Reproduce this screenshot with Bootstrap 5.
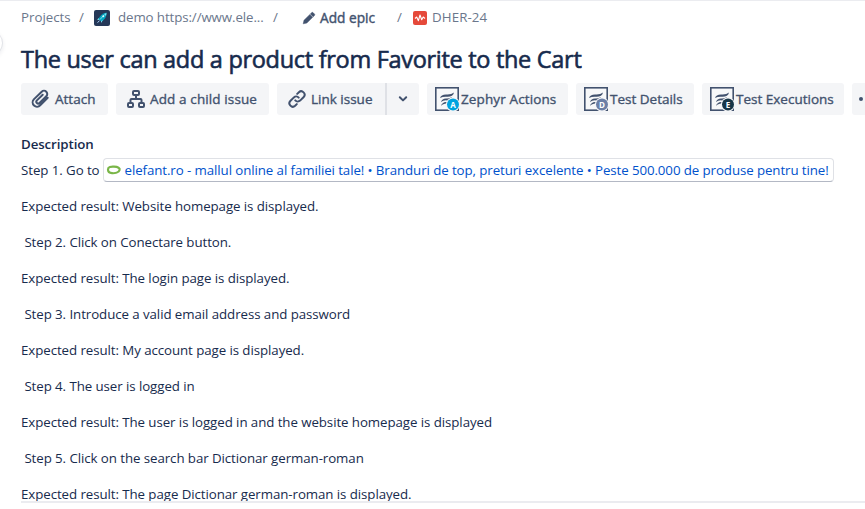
<!DOCTYPE html>
<html lang="en">
<head>
<meta charset="utf-8">
<meta name="viewport" content="width=device-width, initial-scale=1">
<title>DHER-24</title>
<link href="https://cdn.jsdelivr.net/npm/bootstrap@5.3.0/dist/css/bootstrap.min.css" rel="stylesheet">
<style>
body{font-family:"Segoe UI","Open Sans","Noto Sans",sans-serif;font-size:13.3px;color:#172b4d;height:509px;overflow:hidden;background:#fff}
.topline{height:1px;background:#ebecf0}
.side-handle{position:absolute;left:-22px;top:31px;width:24px;height:24px;border-radius:50%;box-shadow:0 0 0 1px rgba(9,30,66,.08),0 2px 4px 1px rgba(9,30,66,.08)}
.page{margin-left:21px}
.crumbs{height:33px;padding-top:1px;color:#6b778c;white-space:nowrap}
.crumbs .epic{color:#42526e;font-size:13.7px;-webkit-text-stroke:.4px #42526e}
.issue-title{font-size:23.5px;font-weight:400;line-height:28px;margin:11px 0 10px;color:#172b4d;white-space:nowrap;letter-spacing:-.3px;-webkit-text-stroke:.6px #172b4d}
.actions{gap:8px;width:844px;overflow:hidden}
.act{height:32px;flex:none;background:#f4f5f7;border-radius:3px;color:#42526e;font-size:13.5px;white-space:nowrap;line-height:32px}
.act span{-webkit-text-stroke:.35px #42526e}
.act svg,.crumbs svg,.smart svg{flex:none;display:block}
.desc-title{font-size:13.3px;font-weight:600;line-height:20px;margin:19px 0 4px;letter-spacing:-.1px}
.desc{height:345px;overflow:hidden;width:844px;border-bottom:2px solid #ebecf0;white-space:pre;letter-spacing:-.075px}
.desc p{line-height:24px;margin:0 0 12px}
.smart{height:24px;border:1px solid #dfe1e6;border-bottom-color:#b3b8c4;border-radius:4px;color:#0052cc;text-decoration:none;margin-left:3px;width:731px;padding-left:2px;letter-spacing:-.09px}
</style>
</head>
<body>
<div class="topline"></div>
<div class="side-handle"></div>
<main class="page">
<nav class="crumbs d-flex align-items-center">
  <span style="width:58px">Projects</span><span style="width:15px">/</span>
  <svg width="16" height="16" viewBox="0 0 16 16"><rect width="16" height="16" rx="2" fill="#253858"/><path d="M4.5 9.5Q6 4 12.5 2.5Q13 8 7.5 11.5Z" fill="#00a3bf"/><path d="M5 8L3 9.5L5 10ZM7 11L7 13L9 10ZM10 4L12.5 3L12 6Z" fill="#79e2f2"/><path d="M6 9.5L10 5.2" stroke="#79e2f2"/><circle cx="9.3" cy="6.3" r="1" fill="#dffbff"/><path d="M3.5 12.5L5.5 10.8" stroke="#b3d4ff"/></svg>
  <span style="width:155px;margin-left:8px;letter-spacing:-.1px">demo https://www.ele...</span><span style="width:29px">/</span>
  <svg width="14" height="14" viewBox="0 0 14 14"><path d="M1.2 12.8L2 9.3L7.9 3.4L10.7 6.2L4.8 12.1ZM8.4 2.9L9.7 1.6Q10.3 1 11 1.6L12.5 3.1Q13.1 3.8 12.5 4.4L11.2 5.7Z" fill="#42526e" stroke="#42526e" stroke-width=".5"/></svg>
  <span class="epic" style="width:77px;margin-left:4px">Add epic</span><span style="width:16px">/</span>
  <svg width="14" height="14" viewBox="0 0 14 14"><rect width="14" height="14" rx="2" fill="#e5493a"/><path d="M2 7.5L3.7 6L5.4 9.7L7 4L8.7 8.7L10.2 6L12 7.5" fill="none" stroke="#fff" stroke-width="1.1" stroke-linejoin="round"/></svg>
  <span style="margin-left:5px;letter-spacing:.1px">DHER-24</span>
</nav>
<h1 class="issue-title">The user can add a product from Favorite to the Cart</h1>
<div class="actions d-flex">
  <div class="act d-flex align-items-center" style="width:87px;padding-left:10px"><svg width="19" height="20" viewBox="0 0 19 20" fill="none" stroke="#42526e" stroke-width="2" stroke-linecap="round"><path d="M16.7 8.8L9.2 16.3A4.2 4.2 0 0 1 2.8 10.4L10.7 2.7A3.2 3.2 0 0 1 15.3 7.3L8.5 14A1.8 1.8 0 0 1 5.9 11.4L11.7 5.7"/></svg><span style="margin-left:5px">Attach</span></div>
  <div class="act d-flex align-items-center" style="width:153px;padding-left:11px"><svg width="18" height="18" viewBox="0 0 18 18" fill="none" stroke="#42526e" stroke-width="2"><rect x="6" y="1" width="6" height="4" rx="1"/><rect x="1" y="13" width="5" height="4" rx="1"/><rect x="12" y="13" width="5" height="4" rx="1"/><path d="M9 5V9M3.5 13V10Q3.5 9 4.5 9H13.5Q14.5 9 14.5 10V13"/></svg><span style="margin-left:5px;letter-spacing:.12px">Add a child issue</span></div>
  <div class="act d-flex align-items-center" style="width:142px;padding-left:11px"><svg width="18" height="18" viewBox="0 0 18 18" fill="none" stroke="#42526e" stroke-width="2" stroke-linecap="round"><path d="M7.3 10.4A3.4 3.4 0 0 0 12.1 10.6L15.7 7A3.4 3.4 0 0 0 10.9 2.2L9.2 3.9"/><path d="M10.7 7.6A3.4 3.4 0 0 0 5.9 7.4L2.3 11A3.4 3.4 0 0 0 7.1 15.8L8.8 14.1"/></svg><span style="margin-left:5px;width:74px">Link issue</span><i style="width:2px;height:32px;background:#dfe1e6"></i><svg style="margin-left:11px" width="10" height="8" viewBox="0 0 10 8"><path d="M1.8 2.2L5 5.4L8.2 2.2" stroke="#42526e" stroke-width="2" fill="none" stroke-linecap="round" stroke-linejoin="round"/></svg></div>
  <div class="act d-flex align-items-center" style="width:141px;padding-left:8px"><svg width="25" height="24" viewBox="0 0 25 24"><rect x=".8" y=".8" width="22.4" height="22.4" fill="#f7f8f9" stroke="#42526e" stroke-width="1.6"/><path d="M5 11Q6 7.5 11 7.5Q16 8 19 5.5Q18 10 12 9.8Q8 9.5 5 11ZM6 15Q7 11.5 11 11.5Q14 11.8 17 10Q15 14 11 13.3Q8 13.3 6 15ZM6 19Q7 15.3 11 15L13 15Q11 17 9 17Q7 17.4 6 19Z" fill="#42526e"/><circle cx="18" cy="17.5" r="7" fill="#f4f5f7"/><circle cx="18" cy="17.5" r="6" fill="#00a3df"/><text x="18" y="20.5" font-size="8" font-weight="700" text-anchor="middle" fill="#fff">A</text></svg><span style="margin-left:1px;letter-spacing:.12px">Zephyr Actions</span></div>
  <div class="act d-flex align-items-center" style="width:118px;padding-left:8px"><svg width="25" height="24" viewBox="0 0 25 24"><rect x=".8" y=".8" width="22.4" height="22.4" fill="#f7f8f9" stroke="#42526e" stroke-width="1.6"/><path d="M5 11Q6 7.5 11 7.5Q16 8 19 5.5Q18 10 12 9.8Q8 9.5 5 11ZM6 15Q7 11.5 11 11.5Q14 11.8 17 10Q15 14 11 13.3Q8 13.3 6 15ZM6 19Q7 15.3 11 15L13 15Q11 17 9 17Q7 17.4 6 19Z" fill="#42526e"/><circle cx="18" cy="17.5" r="7" fill="#f4f5f7"/><circle cx="18" cy="17.5" r="6" fill="#6b7fa6"/><text x="18" y="20.5" font-size="8" font-weight="700" text-anchor="middle" fill="#fff">D</text></svg><span style="margin-left:1px">Test Details</span></div>
  <div class="act d-flex align-items-center" style="width:142px;padding-left:8px"><svg width="25" height="24" viewBox="0 0 25 24"><rect x=".8" y=".8" width="22.4" height="22.4" fill="#f7f8f9" stroke="#42526e" stroke-width="1.6"/><path d="M5 11Q6 7.5 11 7.5Q16 8 19 5.5Q18 10 12 9.8Q8 9.5 5 11ZM6 15Q7 11.5 11 11.5Q14 11.8 17 10Q15 14 11 13.3Q8 13.3 6 15ZM6 19Q7 15.3 11 15L13 15Q11 17 9 17Q7 17.4 6 19Z" fill="#42526e"/><circle cx="18" cy="17.5" r="7" fill="#f4f5f7"/><circle cx="18" cy="17.5" r="6" fill="#173647"/><text x="18" y="20.5" font-size="8" font-weight="700" text-anchor="middle" fill="#fff">E</text></svg><span style="margin-left:1px">Test Executions</span></div>
  <div class="act d-flex align-items-center" style="width:32px;padding-left:7px"><svg width="18" height="4" viewBox="0 0 18 4" fill="#42526e"><circle cx="2" cy="2" r="2"/><circle cx="9" cy="2" r="2"/></svg></div>
</div>
<h2 class="desc-title">Description</h2>
<div class="desc"><p class="d-flex align-items-center">Step 1. Go to<a class="smart d-flex align-items-center" href="#"><svg width="16" height="12" viewBox="0 0 16 12"><path d="M2 5.5C2 3 5 2.5 8 2.7C12 2.9 14.2 4 13.6 6C12.9 8.4 9 9.4 6 9.2C3.5 9 2 7.8 2 5.5Z" fill="none" stroke="#7ab648" stroke-width="2.2"/></svg><span style="margin-left:3px">elefant.ro - mallul online al familiei tale! • Branduri de top, preturi excelente • Peste 500.000 de produse pentru tine!</span></a></p><p>Expected result: Website homepage is displayed.</p><p> Step 2. Click on Conectare button.</p><p>Expected result: The login page is displayed.</p><p> Step 3. Introduce a valid email address and password</p><p>Expected result: My account page is displayed.</p><p> Step 4. The user is logged in</p><p>Expected result: The user is logged in and the website homepage is displayed</p><p> Step 5. Click on the search bar Dictionar german-roman</p><p>Expected result: The page Dictionar german-roman is displayed.</p></div>
</main>
<script src="https://cdn.jsdelivr.net/npm/bootstrap@5.3.0/dist/js/bootstrap.bundle.min.js"></script>
</body>
</html>
